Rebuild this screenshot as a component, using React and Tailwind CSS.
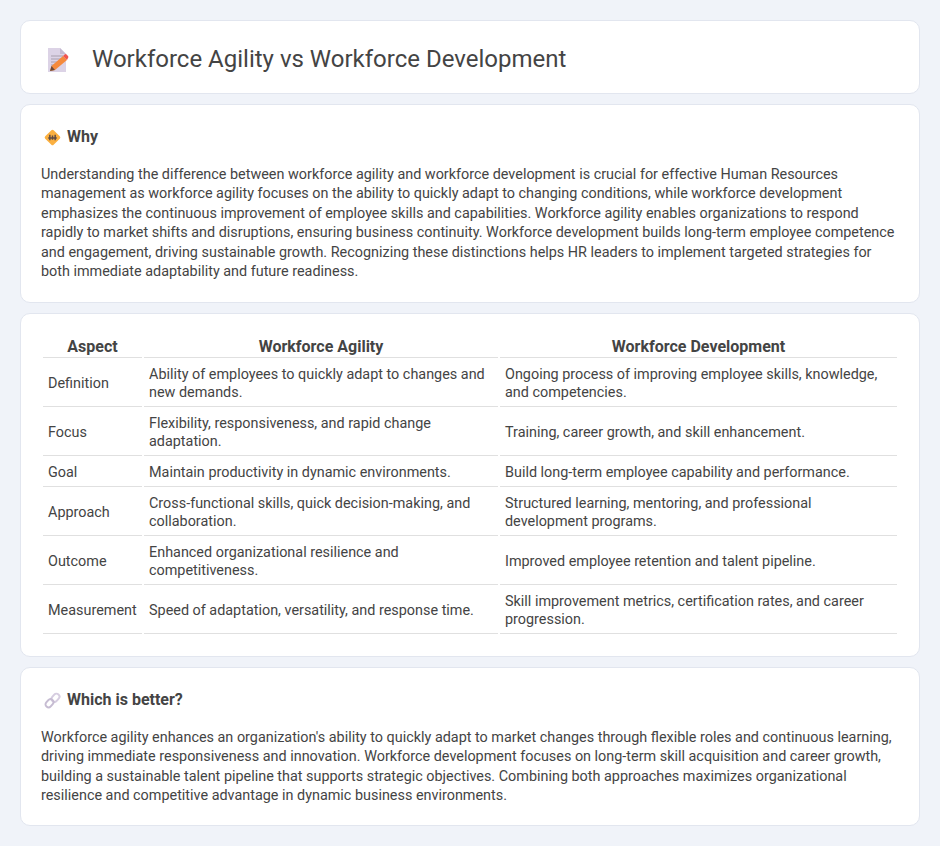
const rows = [
  ["Definition", "Ability of employees to quickly adapt to changes and new demands.", "Ongoing process of improving employee skills, knowledge, and competencies."],
  ["Focus", "Flexibility, responsiveness, and rapid change adaptation.", "Training, career growth, and skill enhancement."],
  ["Goal", "Maintain productivity in dynamic environments.", "Build long-term employee capability and performance."],
  ["Approach", "Cross-functional skills, quick decision-making, and collaboration.", "Structured learning, mentoring, and professional development programs."],
  ["Outcome", "Enhanced organizational resilience and competitiveness.", "Improved employee retention and talent pipeline."],
  ["Measurement", "Speed of adaptation, versatility, and response time.", "Skill improvement metrics, certification rates, and career progression."],
];

function DocIcon() {
  return (
    <svg width="24" height="24" viewBox="0 0 24 24" className="shrink-0">
      <path d="M2 0h12l6 6v18H2z" fill="#dcd3e6" />
      <path d="M14 0l6 6h-6z" fill="#c5bad1" />
      <path d="M5 8h12M5 11h12M5 14h9M5 17h6" stroke="#a79fae" strokeWidth="1.2" />
      <path d="M4 23l1.5-5L17 8l4 4L9 22z" fill="#f58a3c" />
      <path d="M17 8l1.6-1.5a1.5 1.5 0 0 1 2 0l1.4 1.5a1.5 1.5 0 0 1 0 2L21 12z" fill="#f0544f" />
      <path d="M4 23l1.5-5 3.5 4z" fill="#6b4a3a" />
    </svg>
  );
}

function WhyIcon() {
  return (
    <svg width="17" height="17" viewBox="0 0 16 16" className="shrink-0">
      <rect x="2.4" y="2.4" width="11.2" height="11.2" rx="1.5" transform="rotate(45 8 8)" fill="#fbb040" />
      <path d="M5.5 5.5v5M10.5 5.5v5M4 8.5h8M8 6v4" stroke="#5d4a44" strokeWidth="1.4" />
    </svg>
  );
}

function LinkIcon() {
  return (
    <svg width="17" height="17" viewBox="0 0 16 16" fill="none" className="shrink-0">
      <rect x="8" y="1.2" width="5.6" height="8.4" rx="2.8" transform="rotate(42 10.8 5.4)" stroke="#d6cde0" strokeWidth="1.9" />
      <rect x="2.4" y="6.4" width="5.6" height="8.4" rx="2.8" transform="rotate(42 5.2 10.6)" stroke="#c6bcd2" strokeWidth="1.9" />
    </svg>
  );
}

function Card({ className, children }) {
  return (
    <section className={`rounded-[10px] border border-[#e2e6ef] bg-white px-5 ${className}`}>
      {children}
    </section>
  );
}

function SectionTitle({ icon, children }) {
  return (
    <h2 className="ml-[3px] flex h-[22px] items-center gap-[6px] text-[16px] font-bold text-[#444]">
      {icon}
      {children}
    </h2>
  );
}

export default function App() {
  return (
    <div className="min-h-[846px] bg-[#f0f3f9] p-5 font-['Roboto',sans-serif] text-[14.4px] leading-[19.6px] text-[#444]">
      <div className="flex flex-col gap-2.5">
        <Card className="flex h-[74px] items-center gap-[22px] pl-[25px] pt-[5px]">
          <DocIcon />
          <h1 className="text-[24px] font-normal text-[#444]">Workforce Agility vs Workforce Development</h1>
        </Card>

        <Card className="h-[199px] pt-[21px]">
          <SectionTitle icon={<WhyIcon />}>Why</SectionTitle>
          <p className="mt-[16.5px]">
            Understanding the difference between workforce agility and workforce development is crucial for effective Human Resources management as workforce agility focuses on the ability to quickly adapt to changing conditions, while workforce development emphasizes the continuous improvement of employee skills and capabilities. Workforce agility enables organizations to respond rapidly to market shifts and disruptions, ensuring business continuity. Workforce development builds long-term employee competence and engagement, driving sustainable growth. Recognizing these distinctions helps HR leaders to implement targeted strategies for both immediate adaptability and future readiness.
          </p>
        </Card>

        <Card className="h-[344px] pt-5">
          <table className="w-full border-separate border-spacing-[2px] leading-[18px]">
            <thead>
              <tr>
                <th className="w-[99px] border-b border-[#e0e0e0] px-[5px] text-center text-[16px] leading-[21px] font-bold text-[#444]">Aspect</th>
                <th className="w-[354px] border-b border-[#e0e0e0] px-[5px] text-center text-[16px] leading-[21px] font-bold text-[#444]">Workforce Agility</th>
                <th className="border-b border-[#e0e0e0] px-[5px] text-center text-[16px] leading-[21px] font-bold text-[#444]">Workforce Development</th>
              </tr>
            </thead>
            <tbody>
              {rows.map((row) => (
                <tr key={row[0]}>
                  {row.map((cell) => (
                    <td key={cell} className="border-b border-[#e0e0e0] px-[5px] pt-[6px] pb-[4px] align-middle">{cell}</td>
                  ))}
                </tr>
              ))}
            </tbody>
          </table>
        </Card>

        <Card className="h-[159px] pt-[21px]">
          <SectionTitle icon={<LinkIcon />}>Which is better?</SectionTitle>
          <p className="mt-[16.5px]">
            Workforce agility enhances an organization's ability to quickly adapt to market changes through flexible roles and continuous learning, driving immediate responsiveness and innovation. Workforce development focuses on long-term skill acquisition and career growth, building a sustainable talent pipeline that supports strategic objectives. Combining both approaches maximizes organizational resilience and competitive advantage in dynamic business environments.
          </p>
        </Card>
      </div>
    </div>
  );
}
